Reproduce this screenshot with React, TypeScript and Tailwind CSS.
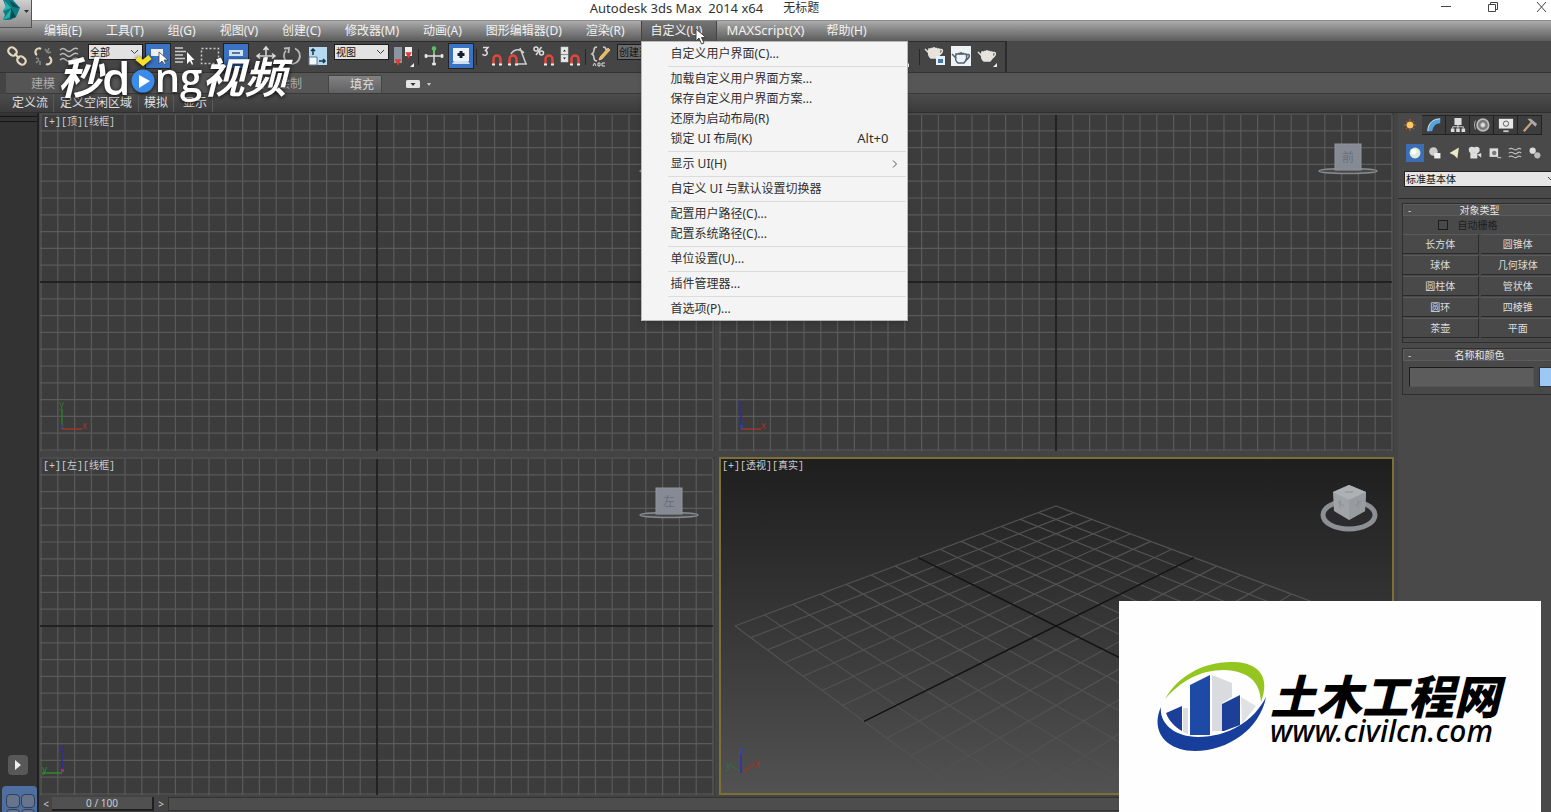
import React from "react";

const menusBefore = ["编辑(E)", "工具(T)", "组(G)", "视图(V)", "创建(C)", "修改器(M)", "动画(A)", "图形编辑器(D)", "渲染(R)"];

type Entry = { label: string; hint?: string; sub?: boolean };
const menuGroups: Entry[][] = [
  [{ label: "自定义用户界面(C)..." }],
  [
    { label: "加载自定义用户界面方案..." },
    { label: "保存自定义用户界面方案..." },
    { label: "还原为启动布局(R)" },
    { label: "锁定 UI 布局(K)", hint: "Alt+0" },
  ],
  [{ label: "显示 UI(H)", sub: true }],
  [{ label: "自定义 UI 与默认设置切换器" }],
  [{ label: "配置用户路径(C)..." }, { label: "配置系统路径(C)..." }],
  [{ label: "单位设置(U)..." }],
  [{ label: "插件管理器..." }],
  [{ label: "首选项(P)..." }],
];

const primitives = ["长方体", "圆锥体", "球体", "几何球体", "圆柱体", "管状体", "圆环", "四棱锥", "茶壶", "平面"];

function AppButton() {
  return (
    <button
      aria-label="应用程序菜单"
      className="absolute left-0 top-0 z-20 flex h-7 w-8 items-start border-b border-r border-[#555] bg-linear-to-b from-[#d0d0d0] to-[#8c8c8c]"
    >
      <svg width="31" height="27" viewBox="0 0 31 27">
        <path d="M3 0h10l7 8-4 9-6 3H3l2-5-2-4 3-4z" fill="#0e7d83" />
        <path d="M9 0l11 8-7-1zM11 8l5 9-6 2z" fill="#0a4d55" />
        <path d="M4 0l7 8-8 3 3-5zM3 20l8-11-1 8z" fill="#29b3ad" />
        <path d="M24 10h5l-2.500 3z" fill="#333" />
      </svg>
    </button>
  );
}

function TitleBar() {
  return (
    <header className="flex h-5 shrink-0 items-start bg-white text-[#333]">
      <h1 className="flex h-4 flex-1 items-center justify-center gap-5 pl-1 text-[13px] leading-4">
        <span className="whitespace-pre">Autodesk 3ds Max  2014 x64</span>
        <span className="text-xs leading-4">无标题</span>
      </h1>
      <div className="flex h-3.5 w-[146px] items-center justify-between pl-9 pr-[2px]">
        <button aria-label="最小化"><svg width="10" height="10"><path d="M0 4.500h10" stroke="#444" /></svg></button>
        <button aria-label="还原">
          <svg width="12" height="12" fill="none" stroke="#444"><path d="M1.500 3.500h7v7h-7zM3.500 3V1.500h7v7H9" /></svg>
        </button>
        <button aria-label="关闭"><svg width="14" height="12"><path d="M2 1l9 10M11 1L2 11" stroke="#444" /></svg></button>
      </div>
    </header>
  );
}

function DropMenu() {
  return (
    <div role="menu" className="absolute -left-px top-full z-30 w-[267px] border border-[#b8b8b8] bg-[#f4f4f4] pb-px pt-[2px] text-xs text-[#303030] shadow-md">
      {menuGroups.map((group, i) => (
        <div key={i} role="group">
          {i > 0 && <div className="ml-[26px] mr-px flex h-[5px] items-center"><div className="h-px w-full bg-[#dcdcdc]" /></div>}
          {group.map((e) => (
            <button key={e.label} role="menuitem" className="flex h-5 w-full items-center whitespace-nowrap pl-[29px] text-left">
              <span className="flex-1">{e.label}</span>
              {e.hint && <span className="pr-[18px] text-[13px]">{e.hint}</span>}
              {e.sub && (
                <svg className="mr-[9px]" width="6" height="8" fill="none" stroke="#555"><path d="M1 .5L4.500 4 1 7.500" /></svg>
              )}
            </button>
          ))}
        </div>
      ))}
    </div>
  );
}

function MenuBar() {
  return (
    <nav className="flex h-[21px] shrink-0 border-t border-[#8a8a8a] bg-linear-to-b from-[#ababab] to-[#5c5c5c] pl-8 text-xs text-[#f2f2f2]">
      {menusBefore.map((m) => (
        <button key={m} className="flex items-center whitespace-nowrap px-3">{m}</button>
      ))}
      <div className="relative ml-1 flex border-x border-[#444] bg-linear-to-b from-[#757575] to-[#525252]">
        <button aria-haspopup="menu" aria-expanded="true" className="flex w-[74px] items-center whitespace-nowrap pl-[9px]">自定义(U)</button>
        <DropMenu />
        <svg className="absolute left-[53px] top-[7px] z-40" width="12" height="18" viewBox="0 0 12 18">
          <path d="M1 1v12l3-3 2.500 6 2.500-1-2.500-5.500H11z" fill="#fff" stroke="#444" />
        </svg>
      </div>
      <button className="flex items-center px-[10px] text-[13px]">MAXScript(X)</button>
      <button className="flex items-center px-3">帮助(H)</button>
    </nav>
  );
}

function Tool({ label, active, children }: { label: string; active?: boolean; children?: React.ReactNode }) {
  return (
    <button aria-label={label} className="flex h-[28px] w-[26px] shrink-0 items-center justify-center">
      <svg
        width="24"
        height="24"
        viewBox="0 0 24 24"
        fill="none"
        stroke="#ddd"
        strokeWidth="1.500"
        className={active ? "bg-[#3b73c4] outline outline-1 outline-[#222]" : ""}
      >
        {children}
      </svg>
    </button>
  );
}

function Sep() {
  return <div className="flex w-[5px] shrink-0 items-center justify-center"><div className="h-4 w-px bg-[#262626]" /></div>;
}

const magnet = <path d="M13.500 20v-5a3.500 3.500 0 0 1 7 0v5" stroke="#e0483c" strokeWidth="2.500" />;
const magnetTips = <path d="M12 20.500h3M19 20.500h3" stroke="#eee" strokeWidth="2" />;

function Pick({ label, value, wide }: { label: string; value: string; wide?: boolean }) {
  return (
    <div className="relative flex shrink-0 items-start pt-[2px]">
      <select
        aria-label={label}
        className={(wide ? "w-[92px] bg-[#6a6a6a] " : "w-[55px] bg-[#e2e2e2] ") + "h-4 appearance-none border border-[#1c1c1c] pl-px text-[10px] leading-[14px] text-[#111]"}
      >
        <option>{value}</option>
      </select>
      <svg className="pointer-events-none absolute right-1 top-[7px]" width="9" height="6" fill="none" stroke="#444"><path d="M1 1l3.500 3.500L8 1" /></svg>
    </div>
  );
}

function Teapot({ dark }: { dark?: boolean }) {
  const c = dark ? "#51616f" : "#e6e3dc";
  return (
    <g stroke={c} fill={dark ? "none" : c}>
      <path d="M7 10h10c2 4 0 7-2 9H9c-2-1-3-4-2-9z" />
      <path d="M7 14L3 10M17 11c4-2 5 2 0 5M12 8v1M9 9.500h6" fill="none" />
    </g>
  );
}

function Toolbar() {
  return (
    <div className="flex h-[31px] shrink-0 bg-[#484848]">
      <div className="flex h-[31px] w-[1007px] border-r-2 border-t border-[#2c2c2c] bg-[#454545] pl-1">
        <Tool label="选择并链接">
          <g stroke="#e3d6bd" strokeWidth="2.200"><rect x="3" y="4" width="9" height="7" rx="3.500" transform="rotate(40 7.500 7.500)" /><rect x="12" y="13" width="9" height="7" rx="3.500" transform="rotate(40 16.500 16.500)" /><path d="M9.500 9.500l5 5" /></g>
        </Tool>
        <Tool label="断开当前选择链接">
          <g stroke="#e3d6bd" strokeWidth="2.200"><path d="M10 5a3.500 3.500 0 1 0-4 6M15 20a3.500 3.500 0 1 0 3-7" /></g>
          <path d="M14 5l2 3M18 4l-2 5M20 8l-3 1M5 14l3 1M5 19l3-3M9 21l0-4" stroke="#888" />
        </Tool>
        <Tool label="绑定到空间扭曲">
          <path d="M3 6q3-3 6 0t6 0 6-1M3 11q3-3 6 0t6 0 6-1M3 16q3-3 6 0t6 0 6-1" stroke="#bbb" />
        </Tool>
        <div className="w-[6px] shrink-0" />
        <Pick label="选择过滤器" value="全部" />
        <div className="w-[2px] shrink-0" />
        <Tool label="选择对象" active><path d="M5 5h12v7H5z" fill="#eee" stroke="none" /><path d="M13 8v12l3-3 3 4 1-1-2-4h4z" fill="#fff" stroke="#444" strokeWidth=".8" /></Tool>
        <Tool label="按名称选择"><path d="M3 4h8M3 7.500h11M3 11h8M3 14.500h10M3 18h8" stroke="#ccc" /><path d="M15 8v12l3-3 2 4 1-1-1.500-4h3z" fill="#fff" stroke="none" /></Tool>
        <Tool label="矩形选择区域"><path d="M3.500 4.500h17v15h-17z" stroke="#ccc" strokeDasharray="2 2" /></Tool>
        <Tool label="窗口/交叉" active><path d="M5 6h14v6H5z" fill="#cfe2f7" stroke="none" /><path d="M8 9h8" stroke="#356" /></Tool>
        <div className="w-1 shrink-0" />
        <Tool label="选择并移动"><path d="M12 3v18M3 12h18M9.500 6L12 3l2.500 3M18 9.500l3 2.500-3 2.500M6 9.500L3 12l3 2.500" /></Tool>
        <Tool label="选择并旋转"><path d="M6 6.500a8 8 0 1 0 9-2M4 4.500l5-.5-.5 5" stroke="#bbb" strokeWidth="1.800" /></Tool>
        <Tool label="选择并缩放">
          <path d="M3 3h18v18H3z" fill="#b5daf2" stroke="none" />
          <path d="M3 13h8v8H3z" fill="#f4f8fb" stroke="#5a7890" strokeWidth="1" />
          <path d="M7 11V5M5 7l2-2 2 2M13 17h6M17 15l2 2-2 2" stroke="#16344d" />
        </Tool>
        <div className="w-[3px] shrink-0" />
        <Pick label="参考坐标系" value="视图" />
        <div className="w-px shrink-0" />
        <Tool label="使用轴点中心">
          <path d="M3 3h8v16H3z" fill="#8c95a3" stroke="none" /><path d="M14 3h7v9h-7z" fill="#eee" stroke="none" />
          <path d="M5 16h4l-2 4zM15.500 9h4l-2 4z" fill="#e33b32" stroke="#e33b32" /><path d="M19 23l4-4v4z" fill="#eee" stroke="none" />
        </Tool>
        <Sep />
        <Tool label="选择并操纵"><path d="M4 12h16M12 4v16" /><path d="M12 10V4" stroke="#58c45c" /><circle cx="12" cy="4.500" r="1.500" fill="#58c45c" stroke="#58c45c" /><path d="M3 10.500v3h2v-3zM19 10.500v3h2v-3zM10.500 19v2h3v-2z" fill="#eee" strokeWidth=".8" /></Tool>
        <div className="w-px shrink-0" />
        <Tool label="键盘快捷键覆盖切换" active><path d="M4 4h16v13H4z" fill="#eef3f8" stroke="none" /><path d="M3 20l2-3h14l2 3z" fill="#cfe0f2" stroke="none" /><path d="M12 7v7M8.500 10.500h7" stroke="#123" strokeWidth="3" /></Tool>
        <Sep />
        <Tool label="捕捉开关"><path d="M3 3.500h5l-2.500 3a2.500 2.500 0 1 1-3 3.500" />{magnet}{magnetTips}</Tool>
        <Tool label="角度捕捉切换"><path d="M10 20h11M14 4l6 16M5 10c3-5 9-6 13-1" stroke="#ccc" /><g transform="translate(-10 0)">{magnet}{magnetTips}</g></Tool>
        <Tool label="百分比捕捉切换"><circle cx="4" cy="5" r="2" /><circle cx="9.500" cy="9" r="2" /><path d="M9.500 3L4 11" />{magnet}{magnetTips}</Tool>
        <Tool label="微调器捕捉切换"><path d="M3.500 3.500h6v6h-6zM3.500 11.500h6v6h-6z" fill="#eee" /><path d="M5 7.500l1.500-2L8 7.500zM5 13.500l1.500 2 1.500-2z" fill="#222" stroke="none" />{magnet}{magnetTips}</Tool>
        <Sep />
        <Tool label="编辑命名选择集">
          <path d="M8 3q-3 0-3 3t-2 4q2 1 2 4t3 3M14 3q3 0 3 3" stroke="#ccc" />
          <path d="M19 4l-8 9-1 3 3-1 8-9z" fill="#f2b749" stroke="#eee" strokeWidth=".6" />
          <path d="M4 22l1.500-3L7 22M9 19v3h2v-3zM16 19h-3v3h3" strokeWidth="1" />
        </Tool>
        <div className="w-[3px] shrink-0" />
        <Pick label="命名选择集" value="创建选择集" wide />
        <Tool label="镜像"><path d="M4 19V5l6 14zM20 19V5l-6 14z" /></Tool>
        <Tool label="对齐"><path d="M4 4v16M8 8h10M8 14h6" /></Tool>
        <Tool label="层管理器"><path d="M4 8h16M4 12h16M4 16h16" /></Tool>
        <Tool label="石墨建模工具"><path d="M4 5h16v14H4z" /></Tool>
        <Tool label="曲线编辑器"><path d="M4 18q8-20 16 0" /></Tool>
        <Tool label="图解视图"><path d="M8 4h8v5H8zM12 9v8" /></Tool>
        <Tool label="材质编辑器"><circle cx="12" cy="12" r="7" /></Tool>
        <Tool label="渲染设置"><path d="M2 8q8-7 10 4v8H2z" fill="#ccc" /><path d="M13 23l4-4v4z" fill="#eee" stroke="none" /></Tool>
        <Sep />
        <Tool label="渲染帧窗口"><g transform="translate(-1 -5)"><Teapot /></g><path d="M13 12h9v9h-9z" fill="#e9f1f8" stroke="none" /><path d="M15 15h5v4h-5z" fill="#4677aa" stroke="none" /></Tool>
        <Tool label="渲染产品"><path d="M2 2h20v20H2z" fill="#eef2f5" stroke="none" /><Teapot dark /></Tool>
        <Tool label="快速渲染"><g transform="translate(0 -2)"><Teapot /></g><path d="M18 23l4-4v4z" fill="#eee" stroke="none" /></Tool>
      </div>
    </div>
  );
}

function Ribbon() {
  return (
    <section aria-label="功能区" className="shrink-0 border-t border-[#333] text-xs text-[#dedede]">
      <div className="ml-[6px] flex h-[21px] items-end border-b border-[#3a3a3a] bg-[#565656]">
        <button className="h-[18px] w-[74px] bg-[#555] text-[#aaa]">建模</button>
        <button className="ml-[174px] mr-[26px] h-[18px] text-[#aaa]">对象绘制</button>
        <button className="flex h-[18px] w-[54px] items-center justify-end border border-b-0 border-[#444] bg-linear-to-b from-[#828282] to-[#616161] pr-[7px]">填充</button>
        <button aria-label="显示选项" className="ml-6 flex h-[18px] items-center gap-1">
          <svg width="28" height="9" viewBox="0 0 28 9"><rect width="14" height="8" rx="1.500" fill="#e4e4e4" /><path d="M4.500 3h5L7 6z" fill="#333" /><path d="M21 3h4l-2 3z" fill="#ccc" /></svg>
        </button>
      </div>
      <div className="flex h-[19px] items-center border-b border-[#2f2f2f] bg-linear-to-b from-[#4c4c4c] to-[#3b3b3b] pl-[7px]">
        <button className="h-[18px] border-r border-[#5a5a5a] px-[5px]">定义流</button>
        <button className="h-[18px] border-r border-[#5a5a5a] px-[6px]">定义空闲区域</button>
        <button className="h-[18px] border-r border-[#5a5a5a] px-[5px]">模拟</button>
        <button className="h-[18px] border-r border-[#5a5a5a] pl-[9px] pr-[5px]">显示</button>
      </div>
    </section>
  );
}

function Watermark() {
  return (
    <div className="pointer-events-none absolute left-[58px] top-[49px] z-20 flex h-14 items-center font-bold text-white drop-shadow-[0_1px_2px_rgba(0,0,0,0.9)]">
      <span className="text-[44px] italic leading-[52px]">秒</span>
      <span className="font-['Open_Sans'] text-[46px] font-semibold leading-[52px]">d</span>
      <svg width="24" height="48" viewBox="0 0 24 48" className="shrink-0">
        <path d="M6 5l6 5 7-6" fill="none" stroke="#f6df28" strokeWidth="5" />
        <circle cx="12" cy="28" r="11.500" fill="#3a8bea" />
        <path d="M8 22l11 6-11 7z" fill="#fff" />
      </svg>
      <span className="font-['Open_Sans'] text-[40px] font-semibold leading-[52px]">ng</span>
      <span className="text-[42px] italic leading-[52px]">视频</span>
    </div>
  );
}

const steps = Array.from({ length: 45 }, (_, i) => i - 22);

function Axes({ v, h, left, names }: { v: string; h: string; left?: boolean; names: [string, string] }) {
  const dx = left ? -20 : 20;
  return (
    <g fontSize="10" fontFamily="Liberation Sans, sans-serif">
      <path d="M22 316v-20" stroke={v} strokeWidth="1.500" />
      <path d={`M22 316h${dx}`} stroke={h} strokeWidth="1.500" />
      <text x="19" y="295" fill={v}>{names[0]}</text>
      <text x={left ? 2 : 42} y="316" fill={h}>{names[1]}</text>
      <path d="M21 315h3v-3h-3z" fill={left ? "#a33060" : "#24459a"} />
    </g>
  );
}

function FlatCube({ face }: { face: string }) {
  return (
    <g>
      <ellipse cx="629" cy="58" rx="29" ry="2.500" fill="#4a4a4a" stroke="#85888c" strokeWidth="1.500" />
      <rect x="616" y="31" width="26" height="26" fill="#858a94" stroke="#8f949c" />
      <text x="629" y="49" textAnchor="middle" fontSize="12" fill="#6a707b">{face}</text>
    </g>
  );
}

function ViewLabel({ children }: { children: React.ReactNode }) {
  return (
    <div className="relative pl-[3px] pt-[3px] font-['Liberation_Mono','Noto_Sans_CJK_SC',monospace] text-[10px] leading-[14px] text-[#ccc]">
      {children}
    </div>
  );
}

function FlatView({ label, face, children }: { label: string; face: string; children: React.ReactNode }) {
  return (
    <div className="relative min-h-0 overflow-hidden bg-[#3c3c3c]">
      <svg className="absolute inset-0 h-full w-full" viewBox="0 0 675 338" preserveAspectRatio="xMidYMid slice">
        <g stroke="#5a5a5a" strokeWidth="1.200">
          {steps.map((i) => <path key={"v" + i} d={`M${337 + i * 16.8} 2v336`} />)}
          {steps.map((i) => <path key={"h" + i} d={`M0 ${169 + i * 16.8}h673`} />)}
        </g>
        <path d="M337 2v336M0 169h673" stroke="#141414" strokeWidth="1.500" />
        <FlatCube face={face} />
        {children}
      </svg>
      <ViewLabel>{label}</ViewLabel>
    </div>
  );
}

const project = (u: number, v: number) => {
  const w = 1 + 0.0234 * (u + v);
  return `${337 + (22.93 * (u - v)) / w} ${169 - (11.38 * (u + v)) / w}`;
};
const cells = Array.from({ length: 15 }, (_, i) => i - 7);

function PerspectiveView() {
  return (
    <div className="relative min-h-0 overflow-hidden bg-linear-to-b from-[#1e1e1e] to-[#525252]">
      <svg className="absolute inset-0 h-full w-full" viewBox="0 0 675 338" preserveAspectRatio="xMidYMid slice">
        <g stroke="#525252" strokeWidth="1.200">
          {cells.map((i) => <path key={i} d={`M${project(i, -7)}L${project(i, 7)}M${project(-7, i)}L${project(7, i)}`} />)}
        </g>
        <path d={`M${project(0, -7)}L${project(0, 7)}M${project(-7, 0)}L${project(7, 0)}`} stroke="#111" strokeWidth="1.400" />
        <ellipse cx="630" cy="58" rx="26" ry="14" fill="#2b2b2d" stroke="#8c8f93" strokeWidth="5" />
        <path d="M630 28l17 7-1 19-16 9-15-9-1-19z" fill="#a0a3a7" />
        <path d="M614 35l16 8 17-8-17-7z" fill="#aeb1b4" />
        <path d="M630 43v20l16-9 1-19z" fill="#989b9f" />
        <path d="M619 45l6 4M621 43v8M636 49l6-5M639 43v8M626 35h8" stroke="#8a8d91" />
        <g fontSize="10" fontFamily="Liberation Sans, sans-serif">
          <path d="M22 316v-18" stroke="#3030b0" strokeWidth="1.500" />
          <path d="M24 315l12-8" stroke="#a03428" strokeWidth="1.500" />
          <path d="M21 314l-10-6" stroke="#2f7040" />
          <text x="20" y="297" fill="#3c3cc0">z</text>
          <text x="36" y="310" fill="#a03428">x</text>
          <text x="7" y="312" fill="#2f7040">y</text>
        </g>
      </svg>
      <div className="pointer-events-none absolute inset-0 border-2 border-[#7d6f38]" />
      <ViewLabel>[+][透视][真实]</ViewLabel>
    </div>
  );
}

function LeftStrip() {
  return (
    <aside className="flex w-[39px] shrink-0 flex-col justify-end border-r-2 border-[#202020] bg-[#333]">
      <div className="mb-auto border-b border-[#161616] pt-[3px]"><div className="border-t border-[#161616] pt-1" /></div>
      <button aria-label="展开" className="mb-[11px] ml-2 flex size-5 items-center justify-center rounded-sm bg-[#585858]">
        <svg width="8" height="10"><path d="M1 0l6 5-6 5z" fill="#eee" /></svg>
      </button>
      <div className="ml-[2px] flex h-[26px] flex-wrap gap-px overflow-hidden rounded-t bg-[#4f6fa0] pl-1 pt-2">
        {[0, 1, 2, 3].map((i) => <div key={i} className="h-3.5 w-3.5 rounded-sm border border-[#2f3f5c] bg-[#66758c]" />)}
      </div>
    </aside>
  );
}

function TimeSlider() {
  return (
    <div className="flex h-[17px] shrink-0 items-center border-t border-[#444] bg-[#444] text-[10px] text-[#ccc]">
      <button className="w-3" aria-label="上一帧">&lt;</button>
      <button className="h-3.5 w-[102px] border-b-2 border-r-2 border-[#1f1f1f] bg-[#505050] leading-3">0 / 100</button>
      <button className="w-3.5" aria-label="下一帧">&gt;</button>
      <div className="h-3.5 flex-1 border border-[#333] bg-[#4d4d4d]" />
    </div>
  );
}

const tabIcons = [
  <g key="0"><circle cx="9" cy="9" r="4" fill="#f2a33c" /><path d="M9 2v14M2 9h14M4.500 4.500l9 9M13.500 4.500l-9 9" stroke="#b9702a" /><circle cx="9" cy="9" r="3.500" fill="#ffc86a" /></g>,
  <g key="1"><path d="M2 16C2 7 8 2 16 2v5c-5 0-8 3-9 9z" fill="#52a5de" /><path d="M2 16C2 7 8 2 16 2" fill="none" stroke="#eee" /></g>,
  <g key="2"><path d="M5 1h8v8H5zM1 13h4v4H1zM7 13h4v4H7zM13 13h4v4h-4z" fill="#ddd" /><path d="M9 9v4M3 13v-2h12v2" stroke="#ddd" fill="none" /></g>,
  <g key="3" fill="none" stroke="#bbb"><circle cx="10" cy="9" r="6.500" fill="#777" strokeWidth="2" /><circle cx="10" cy="9" r="2.500" fill="#ddd" /><path d="M1.500 4q-2 5 0 10" /></g>,
  <g key="4"><path d="M1 2h16v11H1z" fill="#e8e8e8" /><circle cx="9" cy="7.500" r="3" fill="none" stroke="#555" /><path d="M6 16h6" stroke="#ccc" strokeWidth="2" /></g>,
  <g key="5"><path d="M2 16L11 6" stroke="#c6a07e" strokeWidth="2.500" /><path d="M6 2l4 0 7 6-2 3-6-6z" fill="#aaa" /></g>,
];

const kindIcons = [
  <g key="0"><circle cx="9" cy="9" r="7" fill="#dcead9" /><circle cx="7.500" cy="7.500" r="3.500" fill="#fff" /></g>,
  <g key="1"><circle cx="7" cy="7" r="5.500" fill="#ccc" /><path d="M8 9h8v7H8z" fill="#eee" /></g>,
  <g key="2"><path d="M2 9l12-7-2 14-4-4z" fill="#ecebc0" /></g>,
  <g key="3" fill="#ddd"><circle cx="5" cy="5" r="4" /><circle cx="11" cy="5" r="4" /><path d="M3 8h9v8H3zM12 11l5-2v6z" /></g>,
  <g key="4"><path d="M2 3h11v11H2z" fill="#ddd" /><circle cx="8" cy="9" r="3.500" fill="#777" stroke="#eee" /><path d="M12 15h5" stroke="#eee" /></g>,
  <g key="5" fill="none" stroke="#bbb"><path d="M1 4q3-2 6 0t5 0 5 0M1 9q3-2 6 0t5 0 5 0M1 14q3-2 6 0t5 0 5 0" strokeWidth="1.500" /></g>,
  <g key="6" fill="#ddd"><circle cx="6" cy="6" r="4" /><circle cx="12" cy="12" r="4" fill="#bbb" /></g>,
];

function Rollout({ title, children }: { title: string; children: React.ReactNode }) {
  return (
    <section className="border border-[#2e2e2e] pb-1">
      <h2 className="relative h-3 border border-[#5c5c5c] bg-[#505050] text-center text-[10px] leading-[11px] text-[#e6e6e6]">
        <span className="absolute left-1 top-0 text-[#ccc]">-</span>
        {title}
      </h2>
      {children}
    </section>
  );
}

function CommandPanel() {
  return (
    <aside className="w-[153px] shrink-0 overflow-hidden bg-[#494949] text-[10px] text-[#dcdcdc]">
      <div className="w-[159px]">
        <div className="flex h-[22px] pt-[2px]">
          {tabIcons.map((icon, i) => (
            <button key={i} aria-label={"面板 " + (i + 1)} className={(i === 0 ? "border-[#494949] " : "border-[#222] bg-[#3d3d3d] ") + "flex h-5 w-6 items-center justify-center border-r border-b border-t"}>
              <svg width="16" height="16" viewBox="0 0 18 18">{icon}</svg>
            </button>
          ))}
        </div>
        <div className="flex gap-[2px] pl-2 pt-[9px]">
          {kindIcons.map((icon, i) => (
            <button key={i} aria-label={"类别 " + (i + 1)} className={(i === 0 ? "bg-[#3c6db5] " : "") + "flex size-[18px] items-center justify-center"}>
              <svg width="14" height="14" viewBox="0 0 18 18">{icon}</svg>
            </button>
          ))}
        </div>
        <div className="relative ml-1.5 mt-[9px]">
          <select aria-label="对象类别" className="h-4 w-full appearance-none border border-[#222] bg-[#e6e6e6] px-px leading-[14px] text-[#111]">
            <option>标准基本体</option>
          </select>
          <svg className="pointer-events-none absolute right-[1px] top-[5px]" width="9" height="6" fill="none" stroke="#444"><path d="M1 1l3.500 3.500L8 1" /></svg>
        </div>
        <div className="mb-[4px] mt-[11px] h-px bg-[#2a2a2a]" />
        <div className="flex flex-col gap-[5px] pl-1">
          <Rollout title="对象类型">
            <label className="flex h-[18px] items-center justify-center gap-[10px] pr-[24px] text-[#1e1e1e]">
              <input type="checkbox" className="size-[10px] appearance-none border border-[#1d1d1d] bg-[#494949]" />
              自动栅格
            </label>
            <div className="grid grid-cols-2 gap-x-[2px] gap-y-px">
              {primitives.map((p) => (
                <button key={p} className="h-5 border-b border-r border-t border-b-[#2a2a2a] border-r-[#2a2a2a] border-t-[#5a5a5a] leading-[18px]">{p}</button>
              ))}
            </div>
          </Rollout>
          <Rollout title="名称和颜色">
            <div className="flex gap-[5px] pb-[3px] pl-1.5 pt-[6px]">
              <input aria-label="名称" className="h-5 w-[125px] border border-b-[#555] border-l-[#1c1c1c] border-r-[#555] border-t-[#1c1c1c] bg-[#5c5c5c]" />
              <button aria-label="颜色" className="h-5 flex-1 border border-[#333] bg-[#9cc8f8]" />
            </div>
          </Rollout>
        </div>
      </div>
    </aside>
  );
}

function SiteBadge() {
  return (
    <a href="#civilcn" className="absolute bottom-0 right-[10px] z-30 flex h-[211px] w-[422px] items-center bg-[#fefefe] pl-[37px] text-black">
      <svg width="114" height="92" viewBox="0 0 114 92" className="shrink-0">
        <path d="M9 38C22 15 48 0 78 1c27 1 36 17 27 40C104 20 92 10 68 9 44 9 25 20 9 38z" fill="#95c51f" />
        <path d="M34 24l20-10v60H34z" fill="#1c4aa5" />
        <path d="M56 14l20 8v14l-10 6v28H56z" fill="#d9dbde" />
        <path d="M66 43l18-9v30l-16 6h-2z" fill="#1c3f97" />
        <path d="M85 36l15 9-14 18z" fill="#e0e1e4" />
        <path d="M10 52l16-7v25C19 66 13 60 10 52z" fill="#1c3f97" />
        <path d="M27 47h5v26l-5-2z" fill="#dcdde0" />
        <path d="M5 46C3 62 18 76 42 76c30 0 56-16 68-40-6 32-38 54-71 54C10 90-6 70 5 46z" fill="#173e9a" />
      </svg>
      <div className="flex flex-col whitespace-nowrap pt-2">
        <strong className="text-[46px] font-black italic leading-[40px]">土木工程网</strong>
        <span className="font-['Noto_Sans','Open_Sans',sans-serif] text-[30px] font-medium italic leading-[30px]">www.civilcn.com</span>
      </div>
    </a>
  );
}

export default function App() {
  return (
    <div className="relative flex h-screen flex-col overflow-hidden bg-[#444] font-['Noto_Sans','Noto_Sans_CJK_SC',sans-serif]">
      <AppButton />
      <TitleBar />
      <MenuBar />
      <Toolbar />
      <Ribbon />
      <Watermark />
      <main className="flex min-h-0 flex-1">
        <LeftStrip />
        <div className="flex min-w-0 flex-1 flex-col pl-px">
          <div className="grid min-h-0 flex-1 grid-cols-2 grid-rows-2 gap-x-1 gap-y-1.5 pr-1">
            <FlatView label="[+][顶][线框]" face="上"><Axes v="#2c7a2c" h="#a03428" names={["y", "x"]} /></FlatView>
            <FlatView label="[+][前][线框]" face="前"><Axes v="#2c2ca0" h="#a03428" names={["z", "x"]} /></FlatView>
            <FlatView label="[+][左][线框]" face="左"><Axes v="#2c2ca0" h="#2c8a2c" left names={["z", "y"]} /></FlatView>
            <PerspectiveView />
          </div>
          <TimeSlider />
        </div>
        <CommandPanel />
      </main>
      <SiteBadge />
    </div>
  );
}
